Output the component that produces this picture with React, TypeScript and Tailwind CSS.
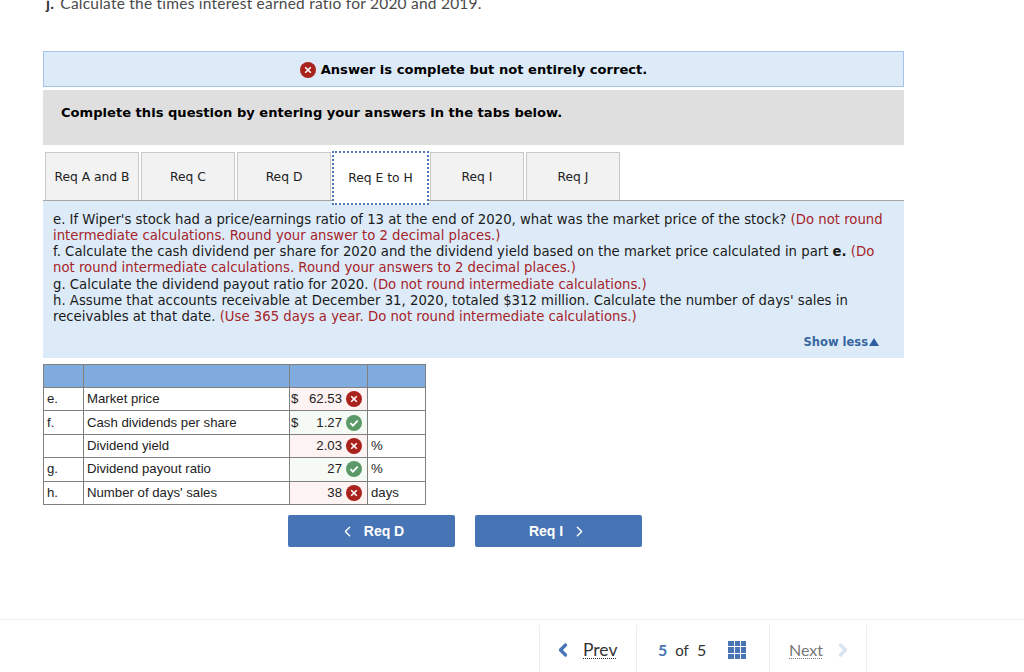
import { ChevronLeft, ChevronRight } from 'lucide-react'

const VERDANA = 'font-["DejaVu_Sans",sans-serif]'

const TABS = ['Req A and B', 'Req C', 'Req D', 'Req E to H', 'Req I', 'Req J']

const ROWS = [
  { key: 'e.', label: 'Market price', dollar: true, value: '62.53', ok: false, unit: '' },
  { key: 'f.', label: 'Cash dividends per share', dollar: true, value: '1.27', ok: true, unit: '' },
  { key: '', label: 'Dividend yield', dollar: false, value: '2.03', ok: false, unit: '%' },
  { key: 'g.', label: 'Dividend payout ratio', dollar: false, value: '27', ok: true, unit: '%' },
  { key: 'h.', label: 'Number of days\' sales', dollar: false, value: '38', ok: false, unit: 'days' },
]

function WrongIcon({ size = 16 }: { size?: number }) {
  return (
    <svg width={size} height={size} viewBox="0 0 16 16" className="shrink-0">
      <circle cx="8" cy="8" r="8" fill="#a9231c" />
      <path d="M5.2 5.2l5.6 5.6M10.8 5.2l-5.6 5.6" stroke="#fff" strokeWidth="1.6" />
    </svg>
  )
}

function RightIcon({ size = 16 }: { size?: number }) {
  return (
    <svg width={size} height={size} viewBox="0 0 16 16" className="shrink-0">
      <circle cx="8" cy="8" r="8" fill="#5b9a68" />
      <path d="M4.4 8.2l2.5 2.5 4.8-5" stroke="#fff" strokeWidth="1.8" fill="none" />
    </svg>
  )
}

export default function App() {
  return (
    <div className="w-[1024px] h-[672px] overflow-hidden bg-white relative">
      {/* ── cut off question line ── */}
      <p className='ml-[46px] -mt-[7px] h-[58px] text-[15.5px] leading-[20px] text-[#4a4a4a] font-["Lato",sans-serif] tracking-[0.23px]'>
        <b className="text-[#333]">j.</b>{' '}<span className="ml-[2px]">Calculate the times interest earned ratio for 2020 and 2019.</span>
      </p>

      <div className={`ml-[43px] w-[861px] ${VERDANA}`}>
        <div className="h-[36px] pt-[2px] flex items-center justify-center gap-[5px] bg-[#ddebf8] border border-[#a3c4e6] text-[13.08px] font-bold text-black">
          <WrongIcon />
          Answer is complete but not entirely correct.
        </div>

        <div className="mt-[3px] h-[55px] bg-[#dfdfdf] px-[18px] pt-[14px] text-[13.08px] leading-[18px] font-bold text-black">
          Complete this question by entering your answers in the tabs below.
        </div>

        {/* ── Tabs ── */}
        <div className="mt-[7px] h-[49px] pl-[2px] flex gap-[2px] border-b border-[#a5a5a5]">
          {TABS.map((t) =>
            t === 'Req E to H' ? (
              <div
                key={t}
                className="w-[93px] h-[49px] -mt-[1px] -ml-px -mr-px pt-[1px] box-content border-2 border-dotted border-[#4a78b8] bg-white flex items-center justify-center text-[12.3px] text-[#222] relative z-10"
              >
                {t}
              </div>
            ) : (
              <div
                key={t}
                className="w-[94px] h-[48px] pt-[2px] border border-b-0 border-[#c8c8c8] bg-[#f2f2f2] flex items-center justify-center text-[12.3px] text-[#222]"
              >
                {t}
              </div>
            ),
          )}
        </div>

        {/* ── Instructions ── */}
        <div className="h-[157px] bg-[#ddebf8] pl-[10px] pr-[10px] pt-[10.5px] text-[13.25px] leading-[16.3px] text-[#1a1a1a] relative">
          <p>
            e. If Wiper's stock had a price/earnings ratio of 13 at the end of 2020, what was the market price of the stock?{' '}
            <span className="text-[#a5232a]">(Do not round intermediate calculations. Round your answer to 2 decimal places.)</span>
          </p>
          <p>
            f. Calculate the cash dividend per share for 2020 and the dividend yield based on the market price calculated in part <b>e.</b>{' '}
            <span className="text-[#a5232a]">(Do not round intermediate calculations. Round your answers to 2 decimal places.)</span>
          </p>
          <p>
            g. Calculate the dividend payout ratio for 2020.{' '}
            <span className="text-[#a5232a]">(Do not round intermediate calculations.)</span>
          </p>
          <p>
            h. Assume that accounts receivable at December 31, 2020, totaled $312 million. Calculate the number of days' sales in receivables at that date.{' '}
            <span className="text-[#a5232a]">(Use 365 days a year. Do not round intermediate calculations.)</span>
          </p>
          <div className="absolute right-[25px] top-[133px] flex items-center gap-[1px] text-[11.5px] leading-[16px] font-bold text-[#38669f]">
            Show less
            <svg width="10" height="8" viewBox="0 0 10 8"><path d="M5 0l5 8H0z" fill="#2f5f9f" /></svg>
          </div>
        </div>

        {/* ── Answer table ── */}
        <table className='mt-[6px] w-[382px] table-fixed border-collapse font-["Liberation_Sans",sans-serif] text-[13.2px] text-[#222]'>
          <colgroup>
            <col className="w-[40px]" />
            <col className="w-[206px]" />
            <col className="w-[78px]" />
            <col className="w-[58px]" />
          </colgroup>
          <tbody>
            <tr className="h-[23px] bg-[#80abdf]">
              <td className="border border-[#808080]" />
              <td className="border border-[#808080]" />
              <td className="border border-[#808080]" />
              <td className="border border-[#808080]" />
            </tr>
            {ROWS.map((r) => (
              <tr key={r.label} className="h-[23.4px]">
                <td className="border border-[#808080] px-[3px] py-0">{r.key}</td>
                <td className="border border-[#808080] px-[3px] py-0">{r.label}</td>
                <td className={`border border-[#808080] p-0 ${r.ok ? 'bg-[#f6faf5]' : 'bg-[#fdf3f3]'}`}>
                  <div className="flex items-center pl-px pr-[5px]">
                    {r.dollar && <span>$</span>}
                    <span className="ml-auto mr-[4px]">{r.value}</span>
                    {r.ok ? <RightIcon /> : <WrongIcon />}
                  </div>
                </td>
                <td className="border border-[#808080] px-[3px] py-0">{r.unit}</td>
              </tr>
            ))}
          </tbody>
        </table>

        {/* ── Req nav buttons ── */}
        <div className='mt-[10px] ml-[245px] flex gap-[20px] font-["Liberation_Sans",sans-serif] text-[14px] font-bold text-white'>
          <div className="w-[167px] h-[32px] pt-[1px] bg-[#4674b4] rounded-[2px] flex items-center justify-center">
            <ChevronLeft size={17} strokeWidth={2} className="mr-[8px]" />
            Req D
          </div>
          <div className="w-[167px] h-[32px] pt-[1px] bg-[#4674b4] rounded-[2px] flex items-center justify-center">
            Req I
            <ChevronRight size={17} strokeWidth={2} className="ml-[8px]" />
          </div>
        </div>
      </div>

      {/* ── Footer pagination ── */}
      <div className='mt-[72px] border-t border-[#f0f0f0] pt-[5px] pl-[539px] font-["Lato",sans-serif]'>
        <div className="flex h-[47px]">
          <div className="w-[98px] border-x border-[#eeeeee] flex items-center pl-[15px] pt-[3px]">
            <ChevronLeft size={20} strokeWidth={4} className="text-[#4674b4] -ml-[2px]" />
            <span className="ml-[10px] text-[17.5px] text-[#333] underline decoration-dotted decoration-1 underline-offset-2">Prev</span>
          </div>
          <div className="w-[133px] border-r border-[#eeeeee] flex items-center pl-[21px] pt-[3px]">
            <b className="text-[16px] text-[#4674b4]">5</b>
            <span className="ml-[8px] text-[15px] text-[#333]">of</span>
            <span className="ml-[8px] text-[16px] text-[#333]">5</span>
            <div className="ml-[22px] w-[18px] h-[18px] grid grid-cols-3 gap-px">
              {Array.from({ length: 9 }).map((_, i) => (
                <span key={i} className="bg-[#4674b4]" />
              ))}
            </div>
          </div>
          <div className="w-[97px] border-r border-[#eeeeee] flex items-center pl-[19px] pt-[3px]">
            <span className="text-[16px] text-[#777] underline decoration-dotted decoration-1 underline-offset-2">Next</span>
            <ChevronRight size={20} strokeWidth={4} className="ml-[10px] text-[#d9e3f2]" />
          </div>
        </div>
      </div>
    </div>
  )
}
